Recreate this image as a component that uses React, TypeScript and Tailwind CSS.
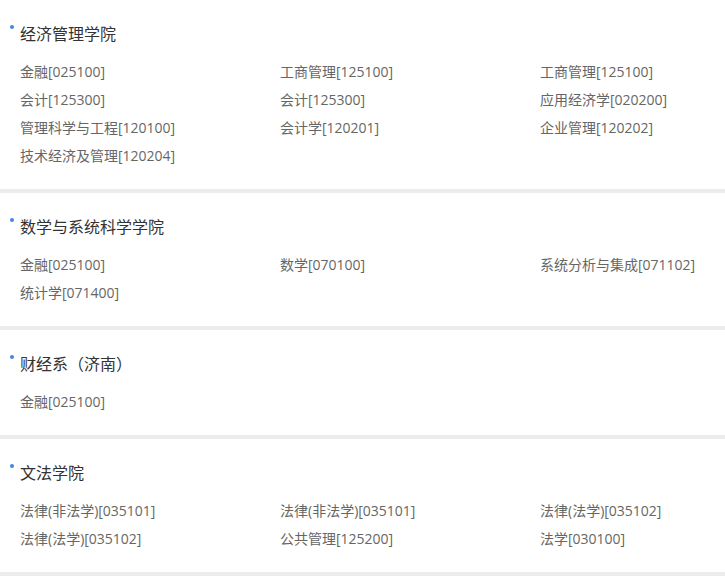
import React from "react";

const sections: { title: string; items: string[] }[] = [
  {
    title: "经济管理学院",
    items: [
      "金融[025100]",
      "工商管理[125100]",
      "工商管理[125100]",
      "会计[125300]",
      "会计[125300]",
      "应用经济学[020200]",
      "管理科学与工程[120100]",
      "会计学[120201]",
      "企业管理[120202]",
      "技术经济及管理[120204]",
    ],
  },
  {
    title: "数学与系统科学学院",
    items: ["金融[025100]", "数学[070100]", "系统分析与集成[071102]", "统计学[071400]"],
  },
  {
    title: "财经系（济南）",
    items: ["金融[025100]"],
  },
  {
    title: "文法学院",
    items: [
      "法律(非法学)[035101]",
      "法律(非法学)[035101]",
      "法律(法学)[035102]",
      "法律(法学)[035102]",
      "公共管理[125200]",
      "法学[030100]",
    ],
  },
];

export default function App() {
  return (
    <div
      className="w-[725px] min-h-[585px] bg-white"
      style={{ fontFamily: '"Open Sans", "Noto Sans CJK SC", sans-serif' }}
    >
      {sections.map((s, i) => (
        <div key={i} className="border-b-4 border-[#ececec]">
          <div className="pl-[20px] pt-[22px] pb-[19px]">
            <div className="relative h-[24px] text-[16px] leading-[24px] text-[#333333]">
              <span className="absolute left-[-10px] top-[3px] h-[4px] w-[4px] rounded-full bg-[#3d8ae0]" />
              {s.title}
            </div>
            <div className="mt-[12px] grid grid-cols-[260px_260px_1fr]">
              {s.items.map((it, j) => (
                <div key={j} className="h-[28px] text-[14px] leading-[28px] text-[#666666] whitespace-nowrap">
                  {it}
                </div>
              ))}
            </div>
          </div>
        </div>
      ))}
    </div>
  );
}
